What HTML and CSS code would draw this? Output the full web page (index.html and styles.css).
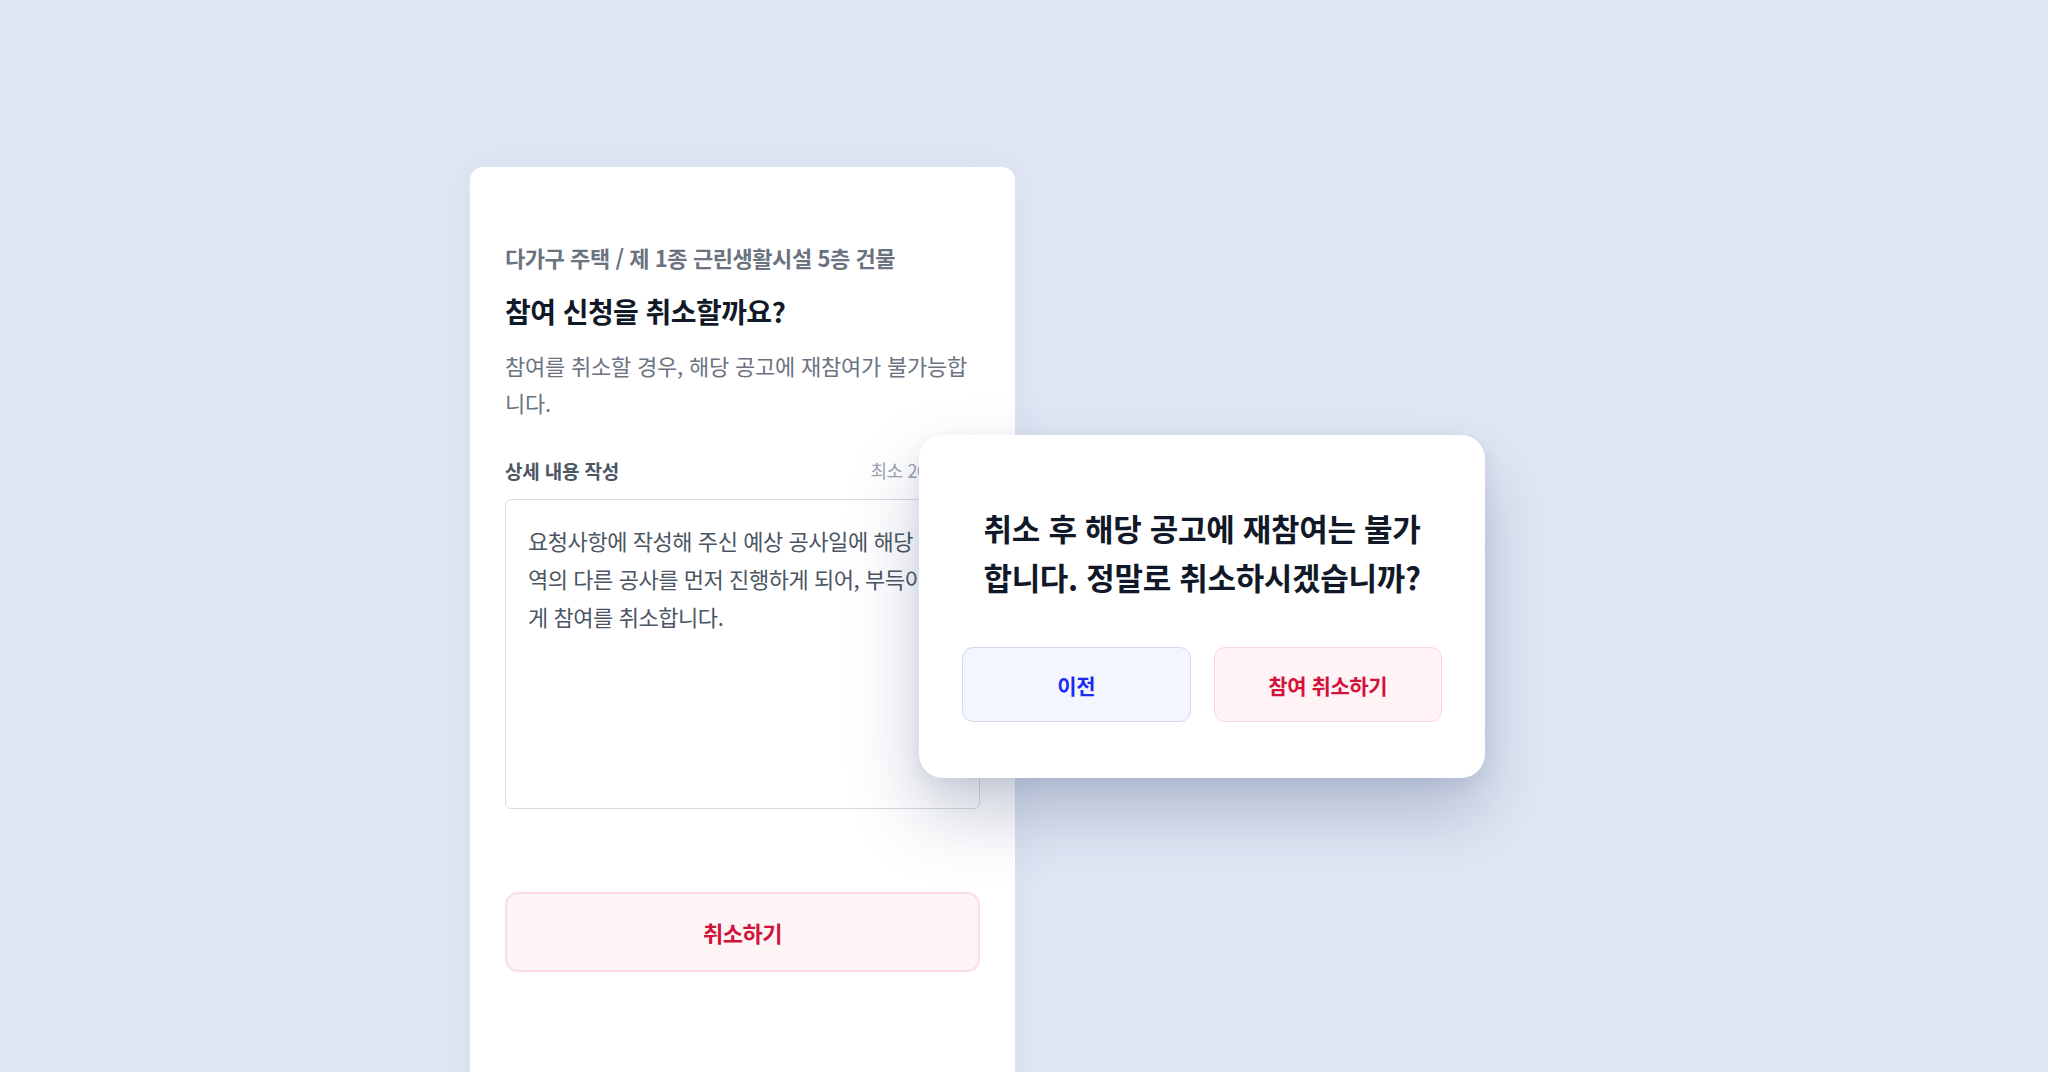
FILE: index.html
```html
<!DOCTYPE html>
<html lang="ko">
<head>
<meta charset="utf-8">
<title>참여 신청 취소</title>
<link rel="stylesheet" href="styles.css">
</head>
<body>
<div class="stage">
  <section class="card">
    <p class="crumb">다가구 주택 / 제 1종 근린생활시설 5층 건물</p>
    <h1 class="title">참여 신청을 취소할까요?</h1>
    <p class="desc">참여를 취소할 경우, 해당 공고에 재참여가 불가능합니다.</p>
    <div class="field-head">
      <span class="field-label">상세 내용 작성</span>
      <span class="field-hint">최소 20자 이상</span>
    </div>
    <div class="textarea">요청사항에 작성해 주신 예상 공사일에 해당 지<br>역의 다른 공사를 먼저 진행하게 되어, 부득이하<br>게 참여를 취소합니다.</div>
    <button class="btn-cancel" type="button">취소하기</button>
  </section>

  <div class="dialog">
    <p class="dialog-text">취소 후 해당 공고에 재참여는 불가<br>합니다. 정말로 취소하시겠습니까?</p>
    <div class="dialog-actions">
      <button class="btn btn-prev" type="button">이전</button>
      <button class="btn btn-confirm" type="button">참여 취소하기</button>
    </div>
  </div>
</div>
</body>
</html>
```

FILE: styles.css
```css
* { box-sizing: border-box; }

html, body {
  margin: 0;
  padding: 0;
  height: 100%;
}

body {
  background: #e1e7f4;
  font-family: "Noto Sans CJK KR", "Noto Sans", sans-serif;
  overflow: hidden;
}

.stage {
  position: relative;
  width: 2048px;
  height: 1072px;
  padding: 167px 0 0 470px;
}

.card {
  width: 545px;
  height: 960px;
  background: #ffffff;
  border-radius: 13px;
  padding: 74px 35px 0 35px;
  box-shadow: 0 0 40px rgba(120, 140, 190, 0.12);
}

.crumb {
  margin: 0;
  font-size: 22px;
  line-height: 32px;
  font-weight: 700;
  color: #6b7280;
  letter-spacing: -0.02em;
}

.title {
  margin: 19px 0 0 0;
  font-size: 28px;
  line-height: 38px;
  font-weight: 700;
  color: #111827;
  letter-spacing: -0.02em;
}

.desc {
  margin: 17px 0 0 0;
  font-size: 22px;
  line-height: 37px;
  font-weight: 400;
  color: #6b7280;
  letter-spacing: -0.01em;
}

.field-head {
  margin-top: 35px;
  display: flex;
  justify-content: space-between;
  align-items: center;
  height: 28px;
}

.field-label {
  font-size: 19px;
  font-weight: 700;
  color: #4b5563;
  letter-spacing: -0.01em;
}

.field-hint {
  font-size: 18px;
  color: #9ca3af;
  letter-spacing: -0.02em;
}

.textarea {
  margin-top: 15px;
  height: 310px;
  border: 1.5px solid #d8dbe0;
  border-radius: 6px;
  padding: 21px 22px;
  font-size: 22px;
  line-height: 38px;
  color: #4b5563;
  letter-spacing: -0.02em;
  white-space: nowrap;
  overflow: hidden;
}

.btn-cancel {
  display: block;
  width: 100%;
  margin-top: 83px;
  height: 80px;
  background: #fdf4f6;
  border: 2px solid #fbdde3;
  border-radius: 13px;
  font-family: inherit;
  font-size: 22px;
  font-weight: 700;
  color: #d11339;
  letter-spacing: -0.02em;
  cursor: pointer;
}

.dialog {
  position: absolute;
  left: 919px;
  top: 435px;
  width: 566px;
  height: 343px;
  background: #ffffff;
  border-radius: 24px;
  padding: 68px 43px 0 43px;
  box-shadow: 0 36px 70px rgba(40, 58, 105, 0.26), 0 6px 18px rgba(40, 58, 105, 0.08);
}

.dialog-text {
  margin: 0;
  text-align: center;
  font-size: 31px;
  line-height: 49px;
  font-weight: 700;
  color: #111827;
  letter-spacing: -0.01em;
  white-space: nowrap;
}

.dialog-actions {
  margin-top: 46px;
  display: flex;
  gap: 23px;
}

.btn {
  flex: 1;
  height: 75px;
  border-radius: 11px;
  font-family: inherit;
  font-size: 21px;
  font-weight: 700;
  letter-spacing: -0.02em;
  cursor: pointer;
}

.btn-prev {
  background: #f3f6fe;
  border: 1.5px solid #d2daee;
  color: #1b2bf2;
}

.btn-confirm {
  background: #fff3f5;
  border: 1.5px solid #fcd6dd;
  color: #d4113a;
}
```
